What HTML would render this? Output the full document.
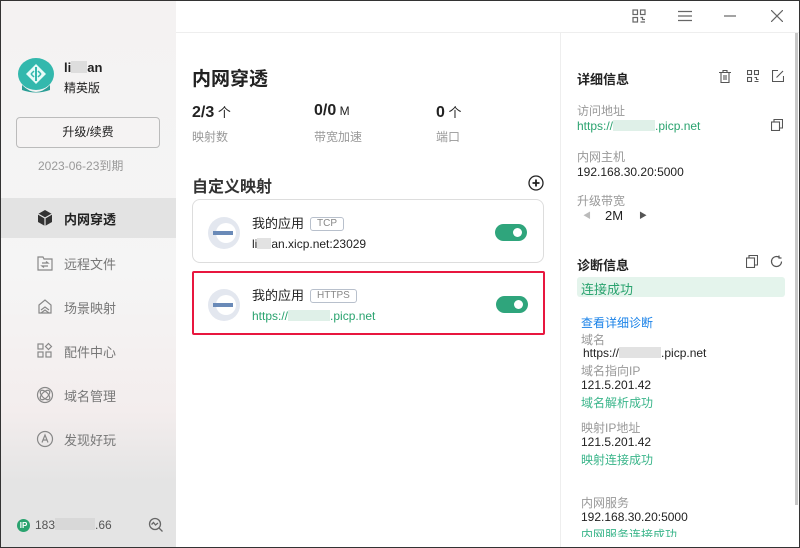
<!DOCTYPE html>
<html><head><meta charset="utf-8"><style>
*{margin:0;padding:0;box-sizing:border-box}
body{width:800px;height:548px;overflow:hidden;font-family:"Liberation Sans","Noto Sans CJK SC",sans-serif;background:#fff;position:relative;color:#222}
.a{position:absolute;white-space:nowrap}
.win{position:absolute;left:0;top:0;width:800px;height:548px;border:1px solid #333;pointer-events:none;z-index:10}
.side{position:absolute;left:0;top:0;width:176px;height:548px;background:linear-gradient(#f4f2f2,#f5f5f5 50%,#f3eded 75%,#e4e4e4 88%,#e4e4e4)}
.nav{position:absolute;left:0;width:176px;height:40px;font-size:13px;color:#777}
.nav span{position:absolute;left:64px;top:11px}
.nav svg{position:absolute;left:36px;top:11px}
.g{color:#999;font-size:12px}
.grn{color:#2aa36f}
.card{position:absolute;left:192px;width:352px;height:64px;border:1px solid #ddd;border-radius:8px;background:#fff}
.tag{display:inline-block;font-size:10px;color:#888;border:1px solid #b8c0cc;border-radius:3px;padding:0 6px;height:14px;line-height:12px;margin-left:6px;vertical-align:2px}
.tog{position:absolute;left:302px;width:32px;height:17px;border-radius:9px;background:#2fa57c}
.tog:after{content:"";position:absolute;right:5px;top:4px;width:9px;height:9px;border-radius:50%;background:#fff}
.rl{font-size:12px;color:#999}
.rv{font-size:12px;color:#222}
</style></head><body>
<div class="side"></div>
<!-- avatar -->
<svg class="a" style="left:17px;top:57px" width="38" height="38" viewBox="0 0 38 38"><ellipse cx="19" cy="17" rx="18" ry="16" fill="#33b8ad"/><path d="M5 28 Q19 42 33 28 L33 33 Q19 38 5 33Z" fill="#2a9e96"/><path d="M19 7 L29 17 L19 27 L9 17Z" fill="#e8fbf8"/><path d="M19 10 L19 24" stroke="#33b8ad" stroke-width="2"/><path d="M14 17 l3-3 M14 17 l3 3 M24 17 l-3-3 M24 17 l-3 3" stroke="#33b8ad" stroke-width="1.5"/></svg>
<div class="a" style="left:64px;top:60px;font-size:13px;font-weight:bold">li<span style="display:inline-block;width:16px;height:12px;background:#ddd;vertical-align:-1px"></span>an</div>
<div class="a" style="left:64px;top:79px;font-size:12px">精英版</div>
<div class="a" style="left:16px;top:117px;width:144px;height:31px;border:1px solid #bbb;border-radius:4px;font-size:12px;text-align:center;line-height:29px;background:#f5f3f3">升级/续费</div>
<div class="a" style="left:38px;top:157px;font-size:12px;color:#999">2023-06-23到期</div>
<div class="nav" style="top:198px;background:#e3e3e3;color:#222;font-weight:bold"><svg width="18" height="18" viewBox="0 0 18 18"><path d="M9 1 L16 5 L16 13 L9 17 L2 13 L2 5Z" fill="#333"/><path d="M2 5 L9 9 L16 5 M9 9 L9 17" stroke="#e3e3e3" stroke-width="1.2" fill="none"/></svg><span>内网穿透</span></div>
<div class="nav" style="top:243px"><svg width="18" height="18" viewBox="0 0 18 18" fill="none" stroke="#888" stroke-width="1.2"><path d="M2 3h5l1 2h8v11H2Z"/><path d="M6 9h6l-2-1.5M12 12H6l2 1.5"/></svg><span>远程文件</span></div>
<div class="nav" style="top:287px"><svg width="18" height="18" viewBox="0 0 18 18" fill="none" stroke="#888" stroke-width="1.2"><path d="M3 7 L9 2 L15 7 L15 15 L3 15Z"/><path d="M5 12 L9 9 L13 12 M5 15 L9 12 L13 15"/></svg><span>场景映射</span></div>
<div class="nav" style="top:331px"><svg width="18" height="18" viewBox="0 0 18 18" fill="none" stroke="#888" stroke-width="1.2"><rect x="2" y="2" width="5" height="5"/><rect x="2" y="10" width="5" height="5"/><rect x="10" y="10" width="5" height="5"/><path d="M12.5 1.5 L15.5 4.5 L12.5 7.5 L9.5 4.5Z"/></svg><span>配件中心</span></div>
<div class="nav" style="top:375px"><svg width="18" height="18" viewBox="0 0 18 18" fill="none" stroke="#888" stroke-width="1.2"><circle cx="9" cy="9" r="7.5"/><ellipse cx="9" cy="9" rx="6" ry="3" transform="rotate(45 9 9)"/><ellipse cx="9" cy="9" rx="6" ry="3" transform="rotate(-45 9 9)"/></svg><span>域名管理</span></div>
<div class="nav" style="top:419px"><svg width="18" height="18" viewBox="0 0 18 18" fill="none" stroke="#888" stroke-width="1.2"><circle cx="9" cy="9" r="7.5"/><path d="M6 12.5 L9 5 L12 12.5 M7.2 10h3.6"/></svg><span>发现好玩</span></div>
<div class="a" style="left:17px;top:519px;width:13px;height:13px;border-radius:50%;background:#2aa36f;color:#fff;font-size:8px;line-height:13px;text-align:center;font-weight:bold">IP</div>
<div class="a" style="left:35px;top:518px;font-size:12px;color:#555">183<span style="display:inline-block;width:40px;height:12px;background:#d8d8d8;vertical-align:-1px"></span>.66</div>
<svg class="a" style="left:148px;top:517px" width="16" height="16" viewBox="0 0 16 16" fill="none" stroke="#666" stroke-width="1.3"><circle cx="7" cy="7" r="5.5"/><path d="M11 11 L14.5 14.5 M3.5 7.5 L5.5 5.5 L7.5 8 L10 6"/></svg>
<!-- topbar -->
<div class="a" style="left:176px;top:32px;width:624px;height:1px;background:#eee"></div>
<svg class="a" style="left:632px;top:9px" width="14" height="14" viewBox="0 0 14 14" fill="none" stroke="#666" stroke-width="1.2"><rect x="1" y="1" width="4.5" height="4.5"/><rect x="8.5" y="1" width="4.5" height="4.5"/><rect x="1" y="8.5" width="4.5" height="4.5"/><path d="M8.5 8.5h2v2h2.5M8.5 13h4.5"/></svg>
<svg class="a" style="left:678px;top:10px" width="14" height="12"><path d="M0 1.5h14M0 6h14M0 10.5h14" stroke="#666" stroke-width="1.2"/></svg>
<svg class="a" style="left:724px;top:15px" width="12" height="2"><path d="M0 1h12" stroke="#666" stroke-width="1.2"/></svg>
<svg class="a" style="left:771px;top:10px" width="12" height="12"><path d="M0 0L12 12M12 0L0 12" stroke="#666" stroke-width="1.2"/></svg>
<!-- middle -->
<div class="a" style="left:192px;top:64px;font-size:19px;font-weight:bold">内网穿透</div>
<div class="a" style="left:192px;top:102px;font-size:16px;font-weight:bold">2/3<span style="font-size:13px;font-weight:normal"> 个</span></div>
<div class="a" style="left:314px;top:102px;font-size:16px;font-weight:bold">0/0<span style="font-size:12px;font-weight:normal"> M</span></div>
<div class="a" style="left:436px;top:102px;font-size:16px;font-weight:bold">0<span style="font-size:13px;font-weight:normal"> 个</span></div>
<div class="a g" style="left:192px;top:128px">映射数</div>
<div class="a g" style="left:314px;top:128px">带宽加速</div>
<div class="a g" style="left:436px;top:128px">端口</div>
<div class="a" style="left:192px;top:173px;font-size:16px;font-weight:bold;color:#333">自定义映射</div>
<svg class="a" style="left:528px;top:175px" width="16" height="16" viewBox="0 0 16 16" fill="none" stroke="#222" stroke-width="1.3"><circle cx="8" cy="8" r="7"/><path d="M8 4.5v7M4.5 8h7" stroke-width="1.8"/></svg>
<div class="card" style="top:199px">
<svg class="a" style="left:14px;top:16px" width="34" height="34" viewBox="0 0 34 34"><circle cx="17" cy="17" r="16" fill="#e3e7ef"/><circle cx="19" cy="17" r="10" fill="#fff"/><rect x="6" y="15" width="20" height="4" fill="#6a8ab8"/></svg>
<div class="a" style="left:59px;top:13px;font-size:13px">我的应用<span class="tag">TCP</span></div>
<div class="a" style="left:59px;top:37px;font-size:12px">li<span style="display:inline-block;width:14px;height:11px;background:#e2e2e2;vertical-align:-1px"></span>an.xicp.net:23029</div>
<div class="tog" style="top:24px"></div>
</div>
<div class="card" style="top:271px;border:2px solid #e8173f;border-radius:2px;height:64px;left:192px;width:353px">
<svg class="a" style="left:13px;top:15px" width="34" height="34" viewBox="0 0 34 34"><circle cx="17" cy="17" r="16" fill="#e3e7ef"/><circle cx="19" cy="17" r="10" fill="#fff"/><rect x="6" y="15" width="20" height="4" fill="#6a8ab8"/></svg>
<div class="a" style="left:58px;top:12px;font-size:13px">我的应用<span class="tag">HTTPS</span></div>
<div class="a grn" style="left:58px;top:36px;font-size:12px">https://<span style="display:inline-block;width:42px;height:11px;background:#dff0e8;vertical-align:-1px"></span>.picp.net</div>
<div class="tog" style="top:23px"></div>
</div>
<!-- right -->
<div class="a" style="left:560px;top:33px;width:1px;height:515px;background:#eee"></div>
<div class="a" style="left:795px;top:33px;width:3px;height:472px;background:#c8c8c8"></div>
<div class="a" style="left:577px;top:69px;font-size:13px;font-weight:bold">详细信息</div>
<svg class="a" style="left:719px;top:70px" width="12" height="13" viewBox="0 0 12 13" fill="none" stroke="#555" stroke-width="1.1"><path d="M0 2.5h12M4 2.5V.5h4v2M2 2.5v10h8v-10M5 5v5M7 5v5"/></svg>
<svg class="a" style="left:747px;top:70px" width="12" height="12" viewBox="0 0 12 12" fill="none" stroke="#555" stroke-width="1.1"><rect x=".5" y=".5" width="4" height="4"/><rect x="7.5" y=".5" width="4" height="4"/><rect x=".5" y="7.5" width="4" height="4"/><path d="M7.5 7.5h2v2h2M7.5 11.5h4"/></svg>
<svg class="a" style="left:772px;top:70px" width="12" height="12" viewBox="0 0 12 12" fill="none" stroke="#555" stroke-width="1.1"><path d="M6 .5H.5v11h11V6M4.5 7.5L11 1"/></svg>
<div class="a rl" style="left:577px;top:102px">访问地址</div>
<div class="a grn" style="left:577px;top:119px;font-size:12px">https://<span style="display:inline-block;width:42px;height:11px;background:#dff0e8;vertical-align:-1px"></span>.picp.net</div>
<svg class="a" style="left:771px;top:119px" width="12" height="12" viewBox="0 0 12 12" fill="none" stroke="#555" stroke-width="1.1"><rect x=".5" y="3" width="8" height="8.5"/><path d="M3 3V.5h8.5V9H8.5"/></svg>
<div class="a rl" style="left:577px;top:148px">内网主机</div>
<div class="a rv" style="left:577px;top:165px">192.168.30.20:5000</div>
<div class="a rl" style="left:577px;top:192px">升级带宽</div>
<div class="a" style="left:583px;top:210px;font-size:8px;color:#bbb">◀</div>
<div class="a rv" style="left:605px;top:208px;font-size:13px">2M</div>
<div class="a" style="left:639px;top:210px;font-size:8px;color:#555">▶</div>
<div class="a" style="left:577px;top:255px;font-size:13px;font-weight:bold">诊断信息</div>
<svg class="a" style="left:746px;top:255px" width="12" height="13" viewBox="0 0 12 13" fill="none" stroke="#555" stroke-width="1.1"><rect x=".5" y="3" width="8" height="9.5"/><path d="M3 3V.5h8.5V10H8.5"/></svg>
<svg class="a" style="left:770px;top:255px" width="13" height="13" viewBox="0 0 13 13" fill="none" stroke="#555" stroke-width="1.2"><path d="M11.5 6.5A5 5 0 1 1 9.5 2.5M9 .5v2.5h2.5"/></svg>
<div class="a" style="left:577px;top:277px;width:208px;height:20px;background:#e4f4ec;border-radius:3px;font-size:13px;color:#2aa36f;padding:2px 4px">连接成功</div>
<div class="a" style="left:581px;top:314px;font-size:12px;color:#1a82e8">查看详细诊断</div>
<div class="a rl" style="left:581px;top:331px">域名</div>
<div class="a rv" style="left:583px;top:346px">https://<span style="display:inline-block;width:42px;height:11px;background:#e2e2e2;vertical-align:-1px"></span>.picp.net</div>
<div class="a rl" style="left:581px;top:362px">域名指向IP</div>
<div class="a rv" style="left:581px;top:378px">121.5.201.42</div>
<div class="a grn" style="left:581px;top:394px;font-size:12px;color:#3ab58a">域名解析成功</div>
<div class="a rl" style="left:581px;top:419px">映射IP地址</div>
<div class="a rv" style="left:581px;top:435px">121.5.201.42</div>
<div class="a" style="left:581px;top:451px;font-size:12px;color:#3ab58a">映射连接成功</div>
<div class="a rl" style="left:581px;top:494px">内网服务</div>
<div class="a rv" style="left:581px;top:510px">192.168.30.20:5000</div>
<div class="a" style="left:581px;top:526px;font-size:12px;color:#3ab58a;height:11px;overflow:hidden">内网服务连接成功</div>
<div class="win"></div>
</body></html>
